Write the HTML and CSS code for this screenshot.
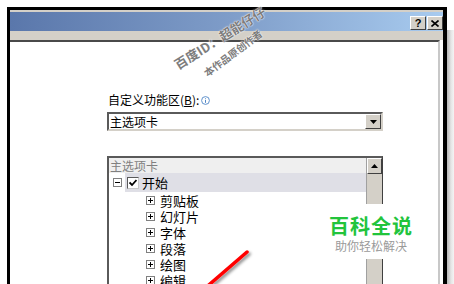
FILE: index.html
```html
<!DOCTYPE html>
<html lang="zh">
<head>
    <meta charset="UTF-8">
    <title>自定义功能区</title>
    <link rel="stylesheet" href="styles.css">
</head>
<body>

<div class="desk">
    <div class="dialog">
        <div class="titlebar">
            <span class="tb-btn tb-help">?</span>
            <span class="tb-btn">
                <svg width="8" height="7" viewBox="0 0 8 7"><path d="M0.5 0.5 L7.5 6.5 M7.5 0.5 L0.5 6.5" stroke="#000" stroke-width="1.6"/></svg>
            </span>
        </div>
        <div class="menu-band"></div>
        <div class="panel">
            <div class="field-label">
                自定义功能区(<u>B</u>):
                <svg class="info" width="9" height="9" viewBox="0 0 9 9"><circle cx="4.5" cy="4.5" r="3.9" fill="none" stroke="#4f86c6" stroke-width="0.9"/><path d="M4.5 3.8 V6.8 M4.5 2.2 V2.9" stroke="#4f86c6" stroke-width="1"/></svg>
            </div>
            <div class="combo">
                <span class="combo-text">主选项卡</span>
                <span class="combo-btn">
                    <svg width="7" height="4" viewBox="0 0 7 4"><path d="M0 0 H7 L3.5 4 Z" fill="#000"/></svg>
                </span>
            </div>
            <div class="listbox">
                <div class="list-body">
                    <div class="list-head">主选项卡</div>
                    <div class="node root">
                        <svg class="expander" width="9" height="9" viewBox="0 0 9 9"><rect x="0.5" y="0.5" width="8" height="8" fill="#fff" stroke="#808080"/><path d="M2 4.5 H7" stroke="#000"/></svg>
                        <div class="node-label">
                            <span class="check">
                                <svg width="8" height="8" viewBox="0 0 8 8"><path d="M0.5 3.5 L3 6 L7.5 1" fill="none" stroke="#000" stroke-width="1.8"/></svg>
                            </span>
                            开始
                        </div>
                    </div>
                    <div class="node child"><svg class="expander" width="9" height="9" viewBox="0 0 9 9"><rect x="0.5" y="0.5" width="8" height="8" fill="#fff" stroke="#808080"/><path d="M2 4.5 H7 M4.5 2 V7" stroke="#000"/></svg>剪贴板</div>
                    <div class="node child"><svg class="expander" width="9" height="9" viewBox="0 0 9 9"><rect x="0.5" y="0.5" width="8" height="8" fill="#fff" stroke="#808080"/><path d="M2 4.5 H7 M4.5 2 V7" stroke="#000"/></svg>幻灯片</div>
                    <div class="node child"><svg class="expander" width="9" height="9" viewBox="0 0 9 9"><rect x="0.5" y="0.5" width="8" height="8" fill="#fff" stroke="#808080"/><path d="M2 4.5 H7 M4.5 2 V7" stroke="#000"/></svg>字体</div>
                    <div class="node child"><svg class="expander" width="9" height="9" viewBox="0 0 9 9"><rect x="0.5" y="0.5" width="8" height="8" fill="#fff" stroke="#808080"/><path d="M2 4.5 H7 M4.5 2 V7" stroke="#000"/></svg>段落</div>
                    <div class="node child"><svg class="expander" width="9" height="9" viewBox="0 0 9 9"><rect x="0.5" y="0.5" width="8" height="8" fill="#fff" stroke="#808080"/><path d="M2 4.5 H7 M4.5 2 V7" stroke="#000"/></svg>绘图</div>
                    <div class="node child"><svg class="expander" width="9" height="9" viewBox="0 0 9 9"><rect x="0.5" y="0.5" width="8" height="8" fill="#fff" stroke="#808080"/><path d="M2 4.5 H7 M4.5 2 V7" stroke="#000"/></svg>编辑</div>
                </div>
                <div class="scrollbar">
                    <div class="sb-up">
                        <svg width="7" height="4" viewBox="0 0 7 4"><path d="M0 4 H7 L3.5 0 Z" fill="#000"/></svg>
                    </div>
                </div>
            </div>
        </div>
    </div>
    <div class="edge-strip"></div>
</div>

<!-- overlays: watermark, site badge, annotation arrow -->
<div class="wm wm-1">百度ID：超能仔仔</div>
<div class="wm wm-2">本作品原创作者</div>

<div class="badge">
    <div class="badge-title">百科全说</div>
    <div class="badge-sub">助你轻松解决</div>
</div>

<svg class="marker" width="454" height="284" viewBox="0 0 454 284">
    <defs>
        <filter id="shadow" x="-50%" y="-50%" width="200%" height="200%">
            <feDropShadow dx="2" dy="2" stdDeviation="1.5" flood-color="#000" flood-opacity="0.45"/>
        </filter>
    </defs>
    <line x1="247" y1="252" x2="203" y2="290" stroke="#ff0000" stroke-width="3.5" stroke-linecap="round" filter="url(#shadow)"/>
</svg>

</body>
</html>
```

FILE: styles.css
```css
body {
    margin: 0;
    padding: 0;
    width: 454px;
    height: 284px;
    overflow: hidden;
    position: relative;
    background-color: #fff;
    font-family: "Noto Sans CJK SC", "Liberation Sans", sans-serif;
}
.desk {
    display: flex;
    padding: 7px 0 0 7px;
    height: 284px;
    box-sizing: border-box;
}
.dialog {
    width: 440px;
    box-sizing: border-box;
    border-top: 3px solid #000;
    border-left: 3px solid #000;
    border-right: 4px solid #000;
    background-color: #fff;
    display: flex;
    flex-direction: column;
    min-height: 0;
}
.titlebar {
    flex-shrink: 0;
    height: 15px;
    border-top: 2px solid #d4d0c8;
    background: linear-gradient(to right, #5a77ab, #7e9cc8 50%, #a8cbef);
    display: flex;
    justify-content: flex-end;
    align-items: flex-start;
    gap: 1px;
    padding-top: 4px;
}
.tb-btn {
    width: 16px;
    height: 14px;
    box-sizing: border-box;
    background-color: #d4d0c8;
    border: 1px solid;
    border-color: #fff #404040 #404040 #fff;
    display: flex;
    align-items: center;
    justify-content: center;
}
.tb-help {
    font-family: "Liberation Sans", sans-serif;
    font-weight: bold;
    font-size: 11px;
    line-height: 12px;
}
.menu-band {
    flex-shrink: 0;
    height: 9px;
    background-color: #d4d0c8;
}
.panel {
    flex: 1;
    min-height: 0;
    overflow: hidden;
    margin-right: 3px;
    border-top: 2px solid #4a4a4a;
    border-right: 2px solid #c8c8c8;
    background-color: #fff;
    padding: 51px 0 0 97px;
}
.field-label {
    font-size: 12px;
    line-height: 14px;
    margin-left: 1px;
    display: flex;
    align-items: center;
}
.info {
    margin-left: 2px;
}
.combo {
    margin-top: 5px;
    width: 276px;
    height: 19px;
    box-sizing: border-box;
    border: 2px solid;
    border-color: #5a5a5a #d4d0c8 #d4d0c8 #5a5a5a;
    display: flex;
    align-items: center;
    justify-content: space-between;
}
.combo-text {
    font-size: 12px;
    line-height: 15px;
    padding-left: 1px;
}
.combo-btn {
    width: 16px;
    height: 15px;
    box-sizing: border-box;
    background-color: #d4d0c8;
    border: 1px solid;
    border-color: #fff #404040 #404040 #fff;
    display: flex;
    align-items: center;
    justify-content: center;
}
.listbox {
    margin-top: 25px;
    width: 276px;
    height: 140px;
    box-sizing: border-box;
    border-top: 2px solid #5a5a5a;
    border-left: 2px solid #5a5a5a;
    border-right: 1px solid #404040;
    display: flex;
}
.list-body {
    flex: 1;
}
.list-head {
    height: 15px;
    line-height: 15px;
    font-size: 12px;
    color: #808080;
    background-color: #efefef;
    padding-left: 1px;
}
.node {
    display: flex;
    align-items: center;
    font-size: 13px;
    color: #000;
}
.root {
    height: 19px;
    padding-left: 4px;
}
.root .expander {
    margin-right: 3px;
}
.node-label {
    flex: 1;
    height: 19px;
    display: flex;
    align-items: center;
    background-color: #dfdfe6;
    padding-left: 2px;
}
.check {
    width: 12px;
    height: 12px;
    box-sizing: border-box;
    border: 1px solid;
    border-color: #5a5a5a #c8c8c8 #c8c8c8 #5a5a5a;
    background-color: #fff;
    display: flex;
    align-items: center;
    justify-content: center;
    margin-right: 3px;
}
.child {
    height: 16px;
    padding-left: 37px;
}
.child .expander {
    margin-right: 5px;
}
.scrollbar {
    width: 15px;
    background-color: #d4d0c8;
    border-left: 1px solid #a0a0a0;
}
.sb-up {
    height: 16px;
    box-sizing: border-box;
    border: 1px solid;
    border-color: #fff #404040 #404040 #fff;
    display: flex;
    align-items: center;
    justify-content: center;
}
.edge-strip {
    width: 7px;
    margin-top: 23px;
    background: linear-gradient(to right, #b8b8b8, #e6e6e6 60%, #f4f4f4);
}
.wm {
    position: absolute;
    white-space: nowrap;
    font-weight: bold;
    color: #7d7d7d;
    text-shadow: 0 0 2px #fff, 0 0 1px #fff;
    text-align: center;
}
.wm-1 {
    left: 160px;
    top: 30px;
    width: 120px;
    font-size: 13px;
    line-height: 16px;
    transform: rotate(-32deg);
}
.wm-2 {
    left: 188px;
    top: 46px;
    width: 90px;
    font-size: 10px;
    line-height: 14px;
    transform: rotate(-37deg);
}
.badge {
    position: absolute;
    left: 322px;
    top: 204px;
    width: 98px;
    height: 55px;
    background-color: #fff;
    text-align: center;
}
.badge-title {
    margin-top: 10px;
    font-size: 20px;
    font-weight: bold;
    line-height: 24px;
    letter-spacing: 1px;
    color: #22c43c;
}
.badge-sub {
    font-size: 12px;
    line-height: 16px;
    color: #9a9a9a;
}
.marker {
    position: absolute;
    left: 0;
    top: 0;
    pointer-events: none;
}
```
